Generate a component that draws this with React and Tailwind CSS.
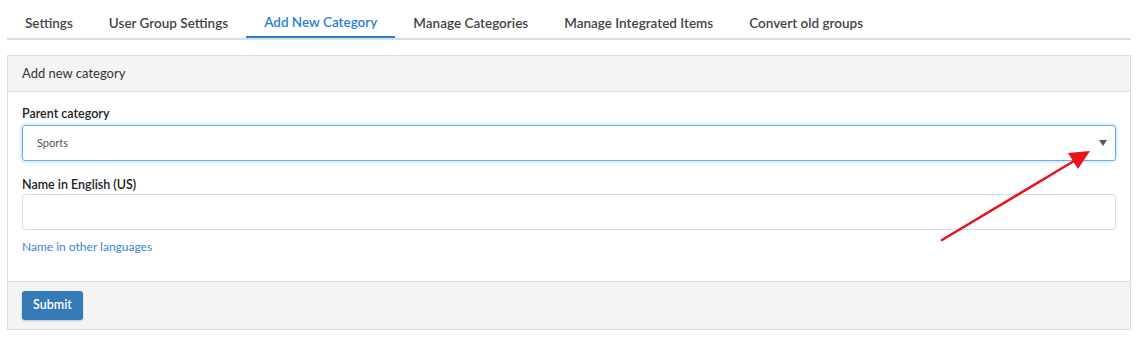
const tabs = [
  'Settings',
  'User Group Settings',
  'Add New Category',
  'Manage Categories',
  'Manage Integrated Items',
  'Convert old groups',
];

export default function App() {
  const active = 'Add New Category';

  return (
    <div
      className="relative w-[1140px] h-[357px] bg-white pl-[7px] pr-[9px] pt-[9px] text-[#333]"
      style={{ fontFamily: 'Lato, "Noto Sans", sans-serif' }}
    >
      <div className="flex border-b-2 border-[#d6e1e7]">
        {tabs.map((t) => (
          <div
            key={t}
            className={
              t === active
                ? 'px-[18px] h-[29px] flex items-center text-[13.5px] font-semibold text-[#2a7fd4] border-b-2 border-[#2a7fd4] -mb-[2px]'
                : 'px-[18px] h-[29px] flex items-center text-[13.5px] font-semibold text-[#444]'
            }
          >
            {t}
          </div>
        ))}
      </div>

      <div className="mt-[15px] border border-[#dcdcdc]">
        <div className="h-[36px] bg-[#f4f4f4] border-b border-[#dcdcdc] flex items-center px-[14px] text-[13px] text-[#333]">
          Add new category
        </div>

        <div className="px-[14px] pt-[14px] pb-[26px]">
          <label className="block leading-4 text-[12.5px] font-semibold text-[#222] mb-[3px]">Parent category</label>
          <div className="relative h-[36px] rounded-[3px] border border-[#66afe9] shadow-[0_0_4px_rgba(102,175,233,0.6)] flex items-center px-[14px]">
            <span className="text-[11px] text-[#555]">Sports</span>
            <span className="absolute right-[8px] top-[14px] w-0 h-0 border-l-[4px] border-r-[4px] border-t-[6px] border-l-transparent border-r-transparent border-t-[#555]" />
          </div>

          <label className="block leading-4 text-[12.5px] font-semibold text-[#222] mt-[16px] mb-[1px]">
            Name in English (US)
          </label>
          <div className="h-[36px] rounded-[3px] border border-[#d5dde2]" />

          <a className="block leading-4 mt-[9px] text-[12px] text-[#3d84d6]">Name in other languages</a>
        </div>

        <div className="bg-[#f4f4f4] border-t border-[#dcdcdc] px-[14px] pt-[9px] pb-[9px] flex">
          <button className="h-[29px] px-[11px] rounded-[3px] bg-[#337ab7] text-white text-[12.5px] font-semibold shadow-[0_1px_2px_rgba(0,0,0,0.2)]">
            Submit
          </button>
        </div>
      </div>

      <svg className="absolute left-0 top-0 pointer-events-none" width="1140" height="357">
        <line x1="942" y1="240" x2="1074" y2="161" stroke="#e8141a" strokeWidth="2.5" strokeLinecap="round" />
        <polygon points="1090,151 1068,153 1078,169" fill="#e8141a" />
      </svg>
    </div>
  );
}
